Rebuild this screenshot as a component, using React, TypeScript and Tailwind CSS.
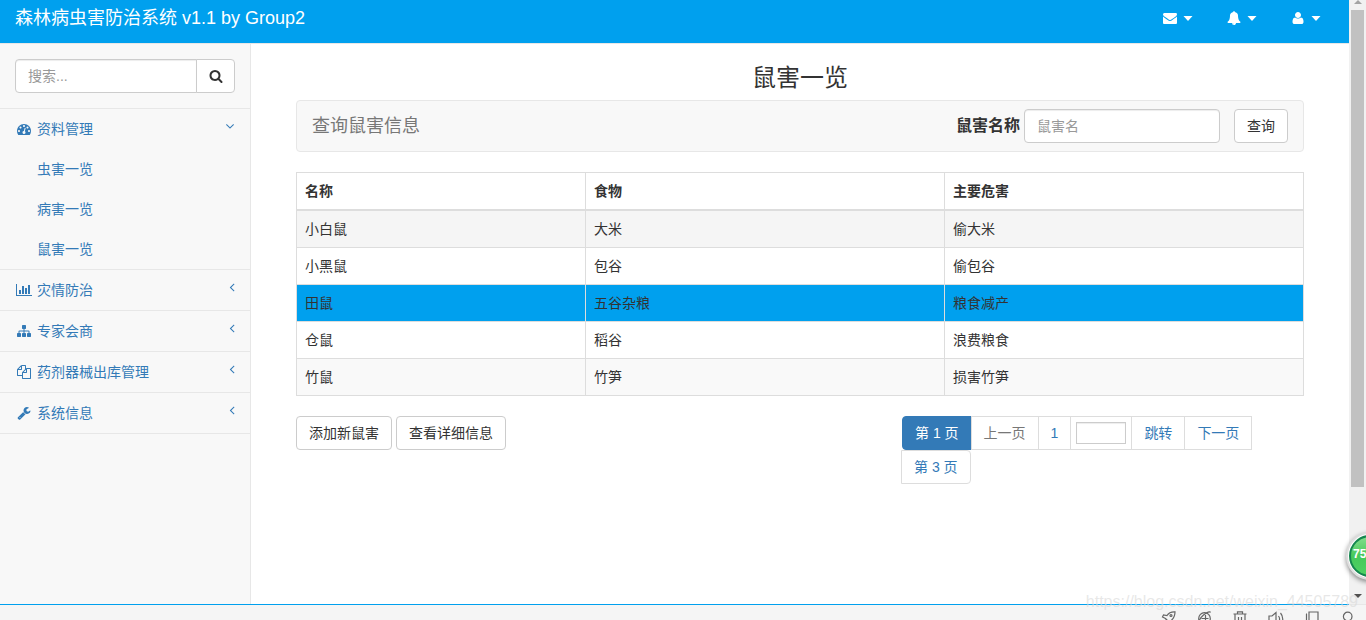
import type { ReactNode } from "react";

type IconProps = { d: string; className?: string; box?: string };

function Icon({ d, className = "size-3.5", box = "0 0 1792 1792" }: IconProps) {
  return (
    <svg viewBox={box} className={`${className} shrink-0`} fill="currentColor" aria-hidden="true">
      <path d={d} />
    </svg>
  );
}

const icons = {
  search:
    "M1216 832q0-185-131.5-316.5t-316.5-131.5-316.5 131.5-131.5 316.5 131.5 316.5 316.5 131.5 316.5-131.5 131.5-316.5zm512 832q0 52-38 90t-90 38q-54 0-90-38l-343-342q-179 124-399 124-143 0-273.5-55.5t-225-150-150-225-55.5-273.5 55.5-273.5 150-225 225-150 273.5-55.5 273.5 55.5 225 150 150 225 55.5 273.5q0 220-124 399l343 343q37 37 37 90z",
  envelope:
    "M1792 710v794q0 66-47 113t-113 47h-1472q-66 0-113-47t-47-113v-794q44 49 101 87 362 246 497 345 57 42 92.5 65.5t94.5 48 110 24.5h2q51 0 110-24.5t94.5-48 92.5-65.5q170-123 498-345 57-39 100-87zm0-294q0 79-49 151t-122 123q-376 261-468 325-10 7-42.5 31t-54 38.5-52 32.5-57.5 27-50 9h-2q-23 0-50-9t-57.5-27-52-32.5-54-38.5-42.5-31q-91-64-262-182.5t-205-142.5q-62-42-117-115.5t-55-136.5q0-78 41.5-130t118.5-52h1472q65 0 112.5 47t47.5 113z",
  bell:
    "M912 1696q0-16-16-16-59 0-101.5-42.5t-42.5-101.5q0-16-16-16t-16 16q0 73 51.5 124.5t124.5 51.5q16 0 16-16zm816-288q0 52-38 90t-90 38h-448q0 106-75 181t-181 75-181-75-75-181h-448q-52 0-90-38t-38-90q50-42 91-88t85-119.5 74.5-158.5 50-206 19.5-260q0-152 117-282.5t307-158.5q-8-19-8-39 0-40 28-68t68-28 68 28 28 68q0 20-8 39 190 28 307 158.5t117 282.5q0 139 19.5 260t50 206 74.5 158.5 85 119.5 91 88z",
  user:
    "M1600 1405q0 120-73 189.5t-194 69.5h-874q-121 0-194-69.500t-73-189.500q0-53 3.500-103.500t14-109 26.500-108.500 43-97.500 62-81 85.500-53.500 111.500-20q9 0 42 21.500t74.500 48 108 48 133.500 21.500 133.500-21.500 108-48 74.500-48 42-21.500q61 0 111.500 20t85.500 53.500 62 81 43 97.500 26.500 108.500 14 109 3.500 103.500zm-320-893q0 159-112.500 271.500t-271.500 112.500-271.500-112.500-112.500-271.500 112.500-271.500 271.500-112.500 271.500 112.500 112.500 271.500z",
  dashboard:
    "M384 1152q0-53-37.5-90.5t-90.5-37.5-90.5 37.5-37.5 90.5 37.5 90.5 90.5 37.5 90.5-37.5 37.5-90.5zm192-448q0-53-37.5-90.5t-90.5-37.5-90.5 37.5-37.5 90.5 37.5 90.5 90.5 37.5 90.5-37.5 37.5-90.5zm428 481l101-382q6-26-7.5-48.5t-38.5-29.5-48 6.5-30 39.5l-101 382q-60 5-107 43.5t-63 98.5q-20 77 20 146t117 89 146-20 89-117q16-60-6-117t-72-91zm660-33q0-53-37.5-90.5t-90.5-37.5-90.5 37.5-37.5 90.5 37.5 90.5 90.5 37.5 90.5-37.5 37.5-90.5zm-640-640q0-53-37.5-90.5t-90.5-37.5-90.5 37.5-37.5 90.5 37.5 90.5 90.5 37.5 90.5-37.5 37.5-90.5zm448 192q0-53-37.5-90.5t-90.5-37.5-90.5 37.5-37.5 90.5 37.5 90.5 90.5 37.5 90.5-37.5 37.5-90.5zm320 448q0 261-141 483-19 29-54 29h-1402q-35 0-54-29-141-221-141-483 0-182 71-348t191-286 286-191 348-71 348 71 286 191 191 286 71 348z",
  chart:
    "M640 896v512h-256v-512h256zm384-512v1024h-256v-1024h256zm1024 1152v128h-2048v-1536h128v1408h1920zm-640-896v768h-256v-768h256zm384-384v1152h-256v-1152h256z",
  sitemap:
    "M1792 1248v320q0 40-28 68t-68 28h-320q-40 0-68-28t-28-68v-320q0-40 28-68t68-28h96v-192h-512v192h96q40 0 68 28t28 68v320q0 40-28 68t-68 28h-320q-40 0-68-28t-28-68v-320q0-40 28-68t68-28h96v-192h-512v192h96q40 0 68 28t28 68v320q0 40-28 68t-68 28h-320q-40 0-68-28t-28-68v-320q0-40 28-68t68-28h96v-192q0-52 38-90t90-38h512v-192h-96q-40 0-68-28t-28-68v-320q0-40 28-68t68-28h320q40 0 68 28t28 68v320q0 40-28 68t-68 28h-96v192h512q52 0 90 38t38 90v192h96q40 0 68 28t28 68z",
  files:
    "M1696 384q40 0 68 28t28 68v1216q0 40-28 68t-68 28h-960q-40 0-68-28t-28-68v-288h-544q-40 0-68-28t-28-68v-672q0-40 20-88t48-76l408-408q28-28 76-48t88-20h416q40 0 68 28t28 68v328q68-40 128-40h416zm-544 213l-299 299h299v-299zm-640-384l-299 299h299v-299zm196 647l316-316v-416h-384v416q0 40-28 68t-68 28h-416v640h512v-256q0-40 20-88t48-76zm956 804v-1152h-384v416q0 40-28 68t-68 28h-416v640h896z",
  wrench:
    "M448 1472q0-26-19-45t-45-19-45 19-19 45 19 45 45 19 45-19 19-45zm644-420l-682 682q-37 37-90 37-52 0-91-37l-106-108q-38-36-38-90 0-53 38-91l681-681q39 98 114.5 173.5t173.5 114.5zm634-435q0 39-23 106-47 134-164.5 217.5t-258.5 83.5q-185 0-316.5-131.5t-131.5-316.5 131.5-316.5 316.5-131.5q58 0 121.5 16.5t107.5 46.5q16 11 16 28t-16 28l-293 169v224l193 107q5-3 79-48.5t135.5-81 70.5-35.5q15 0 23.5 10t8.5 25z",
  angleLeft:
    "M1203 544q0 13-10 23l-393 393 393 393q10 10 10 23t-10 23l-50 50q-10 10-23 10t-23-10l-466-466q-10-10-10-23t10-23l466-466q10-10 23-10t23 10l50 50q10 10 10 23z",
  angleDown:
    "M1395 736q0 13-10 23l-466 466q-10 10-23 10t-23-10l-466-466q-10-10-10-23t10-23l50-50q10-10 23-10t23 10l393 393 393-393q10-10 23-10t23 10l50 50q10 10 10 23z",
};

const menu = [
  { label: "资料管理", icon: icons.dashboard, children: ["虫害一览", "病害一览", "鼠害一览"] },
  { label: "灾情防治", icon: icons.chart, box: "0 0 2048 1792", wide: true },
  { label: "专家会商", icon: icons.sitemap },
  { label: "药剂器械出库管理", icon: icons.files },
  { label: "系统信息", icon: icons.wrench },
];

const rows = [
  { name: "小白鼠", food: "大米", harm: "偷大米", bg: "bg-[#f5f5f5]" },
  { name: "小黑鼠", food: "包谷", harm: "偷包谷", bg: "bg-white" },
  { name: "田鼠", food: "五谷杂粮", harm: "粮食减产", bg: "bg-[#00a0ee]" },
  { name: "仓鼠", food: "稻谷", harm: "浪费粮食", bg: "bg-white" },
  { name: "竹鼠", food: "竹笋", harm: "损害竹笋", bg: "bg-[#f9f9f9]" },
];

const button = "h-[34px] rounded border border-[#ccc] bg-white px-3";
const field =
  "h-[34px] min-w-0 border border-[#ccc] bg-white px-3 shadow-[inset_0_1px_1px_rgba(0,0,0,0.075)] outline-none placeholder:text-[#999]";

function NavButton({ d, label }: { d: string; label: string }) {
  return (
    <button type="button" aria-label={label} className="flex items-center gap-1">
      <span className="flex w-[18px] justify-center">
        <Icon d={d} />
      </span>
      <svg viewBox="0 0 10 5" className="h-[5px] w-2.5" fill="currentColor" aria-hidden="true">
        <path d="M0.5 0h9L5 5z" />
      </svg>
    </button>
  );
}

function Navbar() {
  return (
    <header className="flex h-11 items-start justify-between border-b border-[#e7e7e7] bg-[#00a0ee] pt-2 pr-7 pl-[15px] text-white">
      <a href="#" className="text-lg leading-5">
        森林病虫害防治系统 v1.1 by Group2
      </a>
      <nav className="flex h-5 items-center gap-8">
        <NavButton d={icons.envelope} label="消息" />
        <NavButton d={icons.bell} label="通知" />
        <NavButton d={icons.user} label="用户" />
      </nav>
    </header>
  );
}

function Sidebar() {
  return (
    <aside className="w-[251px] shrink-0 border-r border-[#e7e7e7] bg-[#f8f8f8] text-[#337ab7]">
      <form className="flex border-b border-[#e7e7e7] p-[15px]">
        <input aria-label="搜索" placeholder="搜索..." className={`${field} flex-1 rounded-l`} />
        <button
          type="button"
          aria-label="开始搜索"
          className="-ml-px flex w-[39px] items-center justify-center rounded-r border border-[#ccc] bg-white text-[#333]"
        >
          <Icon d={icons.search} />
        </button>
      </form>
      <ul>
        {menu.map((item) => (
          <li key={item.label} className="border-b border-[#e7e7e7]">
            <a href="#" className="flex h-10 items-center gap-1 px-[15px]">
              <span className="flex w-[18px] justify-center">
                <Icon d={item.icon} box={item.box} className={item.wide ? "h-3.5 w-4" : "size-3.5"} />
              </span>
              {item.label}
              <span className={item.children ? "-mr-0.5 ml-auto pb-1.5" : "-mr-1 ml-auto pb-1.5"}>
                <Icon d={item.children ? icons.angleDown : icons.angleLeft} />
              </span>
            </a>
            {item.children && (
              <ul>
                {item.children.map((child) => (
                  <li key={child}>
                    <a href="#" className="flex h-10 items-center pl-[37px]">
                      {child}
                    </a>
                  </li>
                ))}
              </ul>
            )}
          </li>
        ))}
      </ul>
    </aside>
  );
}

function PageItem({ children, className }: { children: ReactNode; className: string }) {
  return (
    <li className="-ml-px first:ml-0">
      <a href="#" className={`flex h-[34px] items-center border px-3 ${className}`}>
        {children}
      </a>
    </li>
  );
}

function Pagination() {
  return (
    <ul className="flex w-[402px] flex-wrap">
      <PageItem className="rounded-l border-[#337ab7] bg-[#337ab7] text-white">第 1 页</PageItem>
      <PageItem className="border-[#ddd] text-[#777]">上一页</PageItem>
      <PageItem className="border-[#ddd] text-[#337ab7]">1</PageItem>
      <li className="-ml-px flex h-[34px] items-center border border-[#ddd] px-[5px]">
        <input
          aria-label="页码"
          className="h-[22px] w-[50px] border border-[#ccc] px-1 shadow-[inset_0_1px_1px_rgba(0,0,0,0.075)]"
        />
      </li>
      <PageItem className="border-[#ddd] text-[#337ab7]">跳转</PageItem>
      <PageItem className="border-[#ddd] text-[#337ab7]">下一页</PageItem>
      <PageItem className="rounded-r border-[#ddd] text-[#337ab7]">第 3 页</PageItem>
    </ul>
  );
}

function Main() {
  return (
    <main className="min-w-0 flex-1 px-[45px] pt-5">
      <h1 className="text-center text-2xl leading-7">鼠害一览</h1>

      <form className="mt-2 flex h-[52px] items-center rounded border border-[#e7e7e7] bg-[#f8f8f8] px-[15px]">
        <span className="text-lg text-[#777]">查询鼠害信息</span>
        <label htmlFor="pest-name" className="ml-auto text-base font-bold">
          鼠害名称
        </label>
        <input id="pest-name" placeholder="鼠害名" className={`${field} ml-1 w-[196px] rounded`} />
        <button type="button" className={`${button} ml-3.5`}>
          查询
        </button>
      </form>

      <table className="mt-5 w-full table-fixed border-collapse border border-[#ddd] text-left">
        <thead>
          <tr className="border-b-2 border-[#ddd]">
            <th className="w-[289px] border-r border-[#ddd] p-2">名称</th>
            <th className="border-r border-[#ddd] p-2">食物</th>
            <th className="p-2">主要危害</th>
          </tr>
        </thead>
        <tbody>
          {rows.map((row) => (
            <tr key={row.name} className={row.bg}>
              <td className="border border-[#ddd] p-2">{row.name}</td>
              <td className="border border-[#ddd] p-2">{row.food}</td>
              <td className="border border-[#ddd] p-2">{row.harm}</td>
            </tr>
          ))}
        </tbody>
      </table>

      <div className="mt-5 flex items-start justify-between">
        <div className="flex gap-1">
          <button type="button" className={button}>
            添加新鼠害
          </button>
          <button type="button" className={button}>
            查看详细信息
          </button>
        </div>
        <Pagination />
      </div>
    </main>
  );
}

function Scrollbar() {
  return (
    <div className="flex w-[17px] shrink-0 flex-col items-center border-b border-[#e7e7e7] bg-[#f1f1f1]" aria-hidden="true">
      <svg viewBox="0 0 8 10" className="h-2.5 w-2" fill="#a3a3a3">
        <path d="M0 4 4 0l4 4z" />
      </svg>
      <div className="h-[477px] w-[13px] bg-[#c1c1c1]" />
      <svg viewBox="0 0 8 4" className="mt-auto mb-1.5 h-1 w-2" fill="#505050">
        <path d="M0 0h8L4 4z" />
      </svg>
    </div>
  );
}

function ToolIcon({ children }: { children: ReactNode }) {
  return (
    <svg viewBox="0 0 16 16" className="size-4" fill="none" stroke="#666" strokeWidth="1.2" aria-hidden="true">
      {children}
    </svg>
  );
}

function StatusBar() {
  return (
    <footer className="flex h-[15px] shrink-0 items-start justify-end gap-5 overflow-hidden bg-[#f5f5f5] pt-1.5 pr-2.5">
      <ToolIcon>
        <path d="M15 .8C11 .6 8.500 2 7 4.500L3.500 4 2.500 6l3 1.500L9 11l1 3 2-1.500-.3-3.500C14 7 15 4.500 15 .8zM6 9l-2.500 3" />
        <circle cx="11" cy="4.500" r="1" />
      </ToolIcon>
      <ToolIcon>
        <circle cx="8.500" cy="7.500" r="5.800" />
        <path d="M3 13c-1-2 1-6 4.500-9S14 0 14.500 1.500M5.500 7.500h7M9.500 4v7" />
      </ToolIcon>
      <ToolIcon>
        <path d="M1.500 3h13M5.500 3V.8h5V3M3 3v12h10V3M6.500 6v6M9.500 6v6" />
      </ToolIcon>
      <ToolIcon>
        <path d="M1 5h3l4-3.500v13L4 11H1zM10.500 5c1.500 2 1.500 4 0 6M12.500 2c3 3.500 3 8.500 0 12" />
      </ToolIcon>
      <ToolIcon>
        <path d="M5 1h9v11H5zM2.500 3v11.500H12M2 3h1" />
      </ToolIcon>
      <ToolIcon>
        <path d="M12 5.500a4.300 4.300 0 1 1-8.600 0 4.300 4.300 0 0 1 8.600 0zM10.500 9l3.500 4.500" />
      </ToolIcon>
    </footer>
  );
}

export default function App() {
  return (
    <div className="relative flex h-screen flex-col overflow-hidden bg-white font-['Liberation_Sans','Noto_Sans_CJK_SC',sans-serif] text-sm text-[#333]">
      <div className="flex min-h-0 flex-1">
        <div className="flex min-w-0 flex-1 flex-col border-b border-[#00a0ee]">
          <Navbar />
          <div className="flex min-h-0 flex-1">
            <Sidebar />
            <Main />
          </div>
        </div>
        <Scrollbar />
      </div>
      <StatusBar />

      {/* floating speed ball, half off the right edge */}
      <div className="absolute -right-7 bottom-10 flex size-12 items-center rounded-full border-2 border-[#ddd] bg-white p-px shadow-[0_2px_5px_rgba(0,0,0,0.45)]">
        <div className="flex size-full items-center rounded-full border-2 border-[#15864f] bg-linear-to-b from-[#83dd8c] via-[#45c95a] to-[#4fd164] pb-1 pl-0.5 text-xs font-bold text-white">
          75
        </div>
      </div>
      <div className="pointer-events-none absolute right-2 bottom-1.5 text-base text-[#d8d8d8]/60">
        https://blog.csdn.net/weixin_44505789
      </div>
    </div>
  );
}
